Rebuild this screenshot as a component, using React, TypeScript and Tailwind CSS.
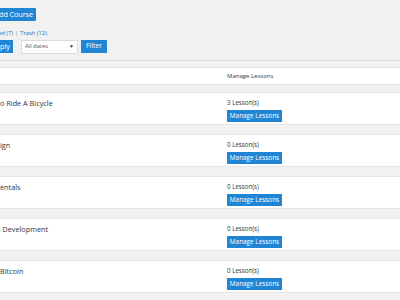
export default function App() {
  const rows = [
    { title: "o Ride A Bicycle", count: 3, shift: "" },
    { title: "ign", count: 0, shift: "" },
    { title: "entals", count: 0, shift: "" },
    { title: "b Development", count: 0, shift: "-ml-[4px]" },
    { title: "Bitcoin", count: 0, shift: "" },
  ];
  return (
    <div className="w-[400px] h-[300px] overflow-hidden bg-[#f1f1f1] font-['Segoe_UI','Open_Sans',sans-serif] text-[#32373c]">
      <div className="pt-[8px]">
        <div className="h-[13px] w-[36px] bg-[#2185d5] text-white text-[7.4px] tracking-[-0.15px] flex items-center justify-end pr-[3px] overflow-hidden whitespace-nowrap rounded-r-[1px]">
          Add Course
        </div>
      </div>
      <div className="mt-[7px] h-[10px] flex items-center text-[5.8px] whitespace-nowrap">
        <span className="w-[13px] flex justify-end overflow-hidden text-[#2271b1]">Published (7)</span>
        <span className="mx-[2px] text-[#8c8f94]">|</span>
        <span className="text-[#2271b1]">Trash (12)</span>
      </div>
      <div className="mt-[2px] flex items-center h-[13px]">
        <div className="h-[13px] w-[13px] bg-[#2185d5] text-white text-[7.4px] flex items-center justify-end pr-[3px] overflow-hidden whitespace-nowrap">
          Apply
        </div>
        <div className="ml-[8px] h-[14px] w-[57px] bg-white border border-[#dcdcde] flex items-center justify-between pl-[3px] pr-[3px] text-[5.8px] text-[#50575e]">
          <span>All dates</span>
          <span className="text-[5px] text-[#333]">▼</span>
        </div>
        <div className="ml-[3px] h-[13px] w-[26px] bg-[#2185d5] text-white text-[6.8px] flex items-center justify-center">
          Filter
        </div>
      </div>
      <div className="mt-[7px] border-t border-[#dcdcde]" />
      <div className="mt-[6px] h-[18px] bg-white border-y border-[#e5e5e5] flex items-center">
        <div className="w-[227px]" />
        <span className="text-[6px] text-[#32373c]">Manage Lessons</span>
      </div>
      <div className="mt-[7px] flex flex-col gap-[9px]">
        {rows.map((r, i) => (
          <div key={i} className="h-[33px] bg-white border-y border-[#e5e5e5] flex">
            <div className="w-[227px] pt-[5px] overflow-hidden">
              <div className={`h-[10px] flex items-center whitespace-nowrap text-[7.3px] text-[#32373c] ${r.shift}`}>
                {r.title}
              </div>
            </div>
            <div className="pt-[5px] flex flex-col">
              <div className="h-[10px] flex items-center text-[6.2px] text-[#32373c] whitespace-nowrap">
                {r.count} Lesson(s)
              </div>
              <div className="mt-[2px] h-[12px] w-[55px] bg-[#2185d5] text-white text-[6.4px] flex items-center justify-center whitespace-nowrap">
                Manage Lessons
              </div>
            </div>
          </div>
        ))}
      </div>
    </div>
  );
}
